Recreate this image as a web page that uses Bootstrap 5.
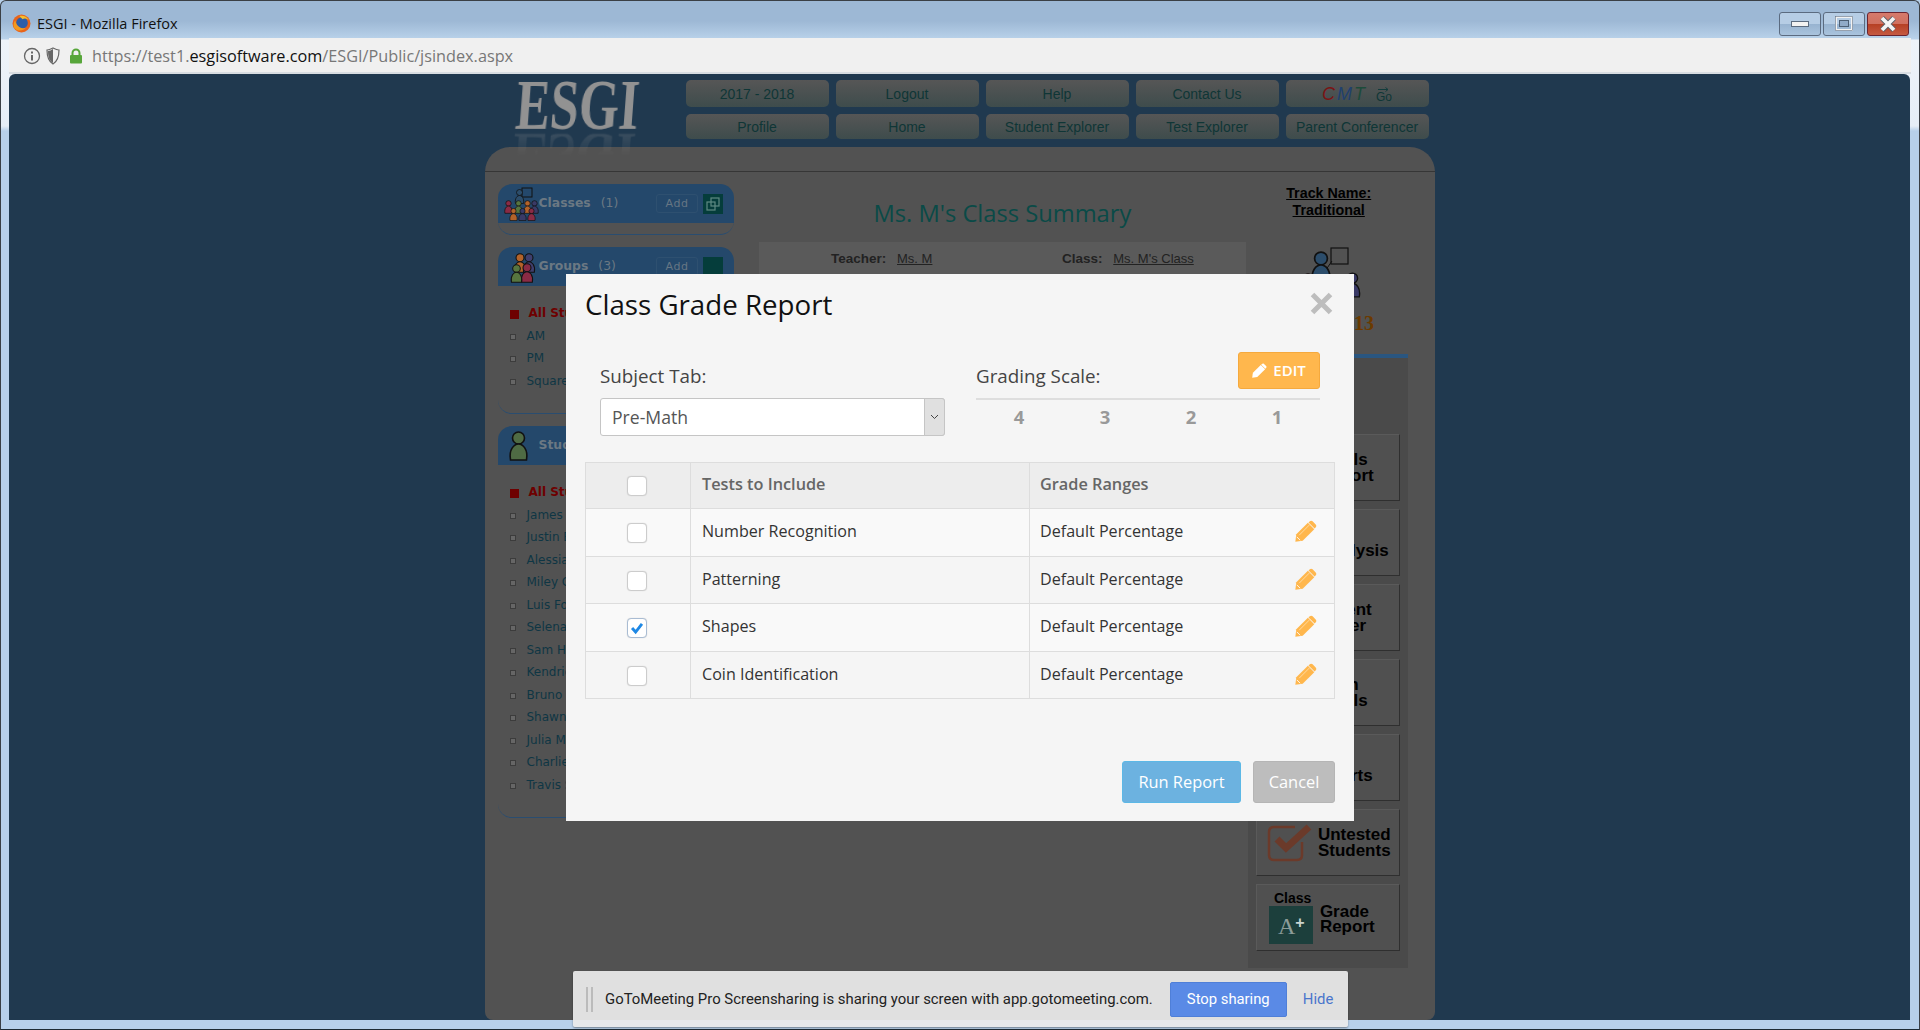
<!DOCTYPE html>
<html lang="en">
<head>
  <meta charset="UTF-8" />
  <meta name="viewport" content="width=device-width, initial-scale=1.0" />
  <title>ESGI - Mozilla Firefox</title>
  <link href="https://cdn.jsdelivr.net/npm/bootstrap@5.3.0/dist/css/bootstrap.min.css" rel="stylesheet" />
  <style>
    html, body { height: 100%; overflow: hidden; }
    body { background: #b7d0ea; font-family: "Open Sans", sans-serif; }
    .flex-none { flex: none; }

    /* browser chrome */
    .win-frame { height: 1030px; width: 1920px; border: 1px solid #3a3f45; border-bottom: 1px solid #1d2a33; border-radius: 6px 6px 0 0; background: linear-gradient(to bottom, #9db8d5 0, #9db8d5 20px, #b9d2ea 38px, #eef3f9 39px, #e6eef7 125px, #b7d0ea 130px); }
    .win-title { height: 37px; padding: 8px 9px 0 11px; font-size: 14.5px; color: #111; }
    .win-logo { margin-right: 6px; }
    .win-btn { width: 42px; height: 24px; border: 1px solid #5b6b80; border-radius: 3px; background: linear-gradient(to bottom, #b6cde5 0, #b6cde5 48%, #97b3d0 50%, #a9c3dd 100%); }
    .win-btn-close { border-color: #6b2430; background: linear-gradient(to bottom, #d67a6c 0, #d0705f 48%, #b63f23 50%, #c55a42 100%); }
    .win-btn-row { gap: 2px; margin-right: 1px; }
    .addr-bar { height: 36px; margin: 0 8px 0 8px; padding: 2px 11px 0 14px; background: #f0f0f0; border-bottom: 2px solid #d8dde2; font-size: 16.25px; color: #777; }
    .addr-lock { margin: 0 9px 0 4px; }
    .addr-dark { color: #111; }

    /* dimmed application */
    .app-page { height: 946px; margin: 0 9px 0 8px; background: #20394f; border-radius: 6px 6px 0 0; position: relative; overflow: hidden; }
    .app-wrap { width: 950px; height: 100%; margin: 0 auto; }
    .app-top { height: 73px; padding: 6px 6px 0 31px; }
    .esgi-logo { width: 170px; padding-left: 2px; }
    .esgi-word { display: block; height: 44px; font-family: "Liberation Serif", serif; font-weight: 700; font-size: 66px; line-height: 44px; color: #929292; transform: scale(.78, 1.1) skewX(-6deg); transform-origin: left top; -webkit-box-reflect: below 5px linear-gradient(transparent 55%, rgba(0, 0, 0, .22)); }
    .nav-grid { display: grid; grid-template-columns: repeat(5, 143px); grid-template-rows: 27px 25px; gap: 7px; }
    .nav-tile { display: flex; align-items: center; justify-content: center; padding-top: 2px; border-radius: 5px; background: linear-gradient(to bottom, #565656, #3e4c4c); font-family: "Liberation Sans", sans-serif; font-size: 14px; color: #0f3636; }
    .cmt-c { color: #7a1414; } .cmt-m { color: #20406f; } .cmt-t { color: #1c4b3a; }
    .cmt-word { font-size: 18px; font-style: italic; letter-spacing: 2px; margin-right: 9px; }
    .cmt-go { font-size: 12px; line-height: 11px; }

    .app-panel { height: 873px; background: #525252; border-radius: 25px 25px 8px 8px; }
    .panel-rule { height: 25px; border-bottom: 1px solid #363636; }
    .panel-body { padding: 12px 25px 0 13px; }
    .side-col { width: 237px; margin-right: 25px; font-family: "DejaVu Sans", sans-serif; }
    .side-box { border-bottom: 1px solid #2a4d70; border-radius: 0 0 14px 14px; margin-bottom: 12px; }
    .side-head { height: 39px; background: #24486b; border-radius: 14px 14px 0 0; padding: 0 11px 0 5px; color: #6b7883; font-size: 12.4px; }
    .side-ico { width: 36px; flex: none; }
    .side-name { font-weight: 700; margin-right: 10px; }
    .side-add { margin-left: auto; width: 42px; height: 19px; border: 1px solid #2e5070; border-radius: 3px; font-size: 11px; line-height: 17px; text-align: center; letter-spacing: .5px; color: #667684; }
    .side-addico { width: 20px; height: 20px; background: #053d3b; margin-left: 5px; }
    .side-spacer { height: 11px; }
    .side-list { padding: 16px 0 21px 12px; margin: 0; list-style: none; font-size: 12px; line-height: 22.5px; color: #0f3644; }
    .side-list li { position: relative; padding-left: 17px; white-space: nowrap; }
    .side-list li::before { content: ""; position: absolute; left: 0; top: 9px; width: 6px; height: 6px; border: 1px solid #3c3c3c; background: #666; }
    .side-list li.side-all { color: #6e0000; font-weight: 700; padding-left: 19px; }
    .side-list li.side-all::before { width: 9px; height: 9px; background: #6e0000; border: 0; top: 8px; }
    .mid-col { width: 488px; }
    .mid-title { height: 58px; padding-top: 11px; margin: 0; font-size: 23.7px; font-weight: 400; line-height: 36px; color: #0a4a47; text-align: center; }
    .mid-info { height: 60px; background: #5a5a5a; font-family: "Liberation Sans", sans-serif; font-size: 13.5px; color: #222; padding-top: 7px; }
    .mid-info u { margin-left: 7px; font-size: 13px; }
    .info-a { width: 303px; padding-left: 72px; }
    .right-col { width: 162px; margin-left: 2px; }
    .track-name { height: 62px; padding-top: 1px; text-align: center; font-family: "Liberation Sans", sans-serif; font-weight: 700; font-size: 14.3px; line-height: 17px; color: #000; text-decoration: underline; }
    .track-ico { height: 108px; position: relative; }
    .track-svg { margin-left: 28px; }
    .track-count { position: absolute; left: 106px; top: 62px; font-family: "Liberation Serif", serif; font-weight: 700; font-size: 20px; color: #6b3a00; }
    .tool-col { height: 614px; border-top: 4px solid #2a5680; background: #4a4a4a; padding: 76px 8px 0; margin-right: 2px; }
    .tool-tile { height: 67px; margin-bottom: 8px; border: 1px solid #5a5a5a; border-right-color: #2f2f2f; border-bottom-color: #2f2f2f; display: flex; align-items: center; font-family: "Liberation Sans", sans-serif; font-weight: 700; font-size: 17px; line-height: 15.5px; color: #000; background: #505050; }
    .tool-ico { width: 62px; flex: none; position: relative; height: 100%; }
    .tool-untested .tool-ico { width: 61px; }
    .tool-grade { padding-top: 3px; }
    .tool-grade .tool-ico { width: 63px; }
    .tool-sub { position: absolute; left: 17px; top: 3px; font-size: 14px; line-height: 14px; }
    .tool-square { position: absolute; left: 12px; top: 18px; width: 44px; height: 38px; background: #1c3f3c; color: #8c9c98; font-family: "Liberation Serif", serif; font-weight: 400; font-size: 24px; line-height: 40px; padding-left: 9px; }
    .tool-square sup { color: #c9d4d0; font-family: "Liberation Sans", sans-serif; font-weight: 700; font-size: 16px; top: -6px; position: relative; vertical-align: baseline; }
    .tool-check { position: absolute; left: 10px; top: 14px; }
    .panel-foot { margin-top: auto; padding-left: 382px; font-size: 14px; line-height: 16px; padding-bottom: 1px; color: #5c5c5c; }

    /* the dialog */
    .grade-dialog { position: absolute; left: 557px; top: 200px; width: 788px; height: 547px; padding: 12px 19px 18px 19px; background: #f5f5f5; border: 0; border-radius: 0; color: #333; }
    .dlg-head { height: 66px; }
    .dlg-title { font-size: 27.7px; line-height: 36px; font-weight: 400; color: #111; margin: 0; }
    .dlg-close { width: 23px; margin: 6px 2px 0 0; }
    .dlg-form { height: 110px; padding: 0 15px 0 15px; gap: 31px; }
    .dlg-left { width: 345px; }
    .dlg-right { width: 344px; }
    .dlg-label { font-size: 18.8px; line-height: 24px; color: #444; margin: 12px 0 10px; }
    .sel-wrap { position: relative; height: 38px; }
    .subject-select { height: 38px; padding: 0 0 0 11px; font-size: 17.6px; color: #555; border: 1px solid #c5c5c5; border-radius: 3px; background: #fff; appearance: none; box-shadow: none; }
    .sel-arrow { position: absolute; right: 0; top: 0; width: 21px; height: 38px; background: #e0e0e0; border: 1px solid #c5c5c5; border-radius: 0 3px 3px 0; display: flex; align-items: center; justify-content: center; }
    .edit-btn { width: 82px; height: 37px; padding: 0; gap: 6px; background: #ffb74d; border: 1px solid #f5a93d; border-radius: 3px; font-size: 15px; font-weight: 600; color: #fff; }
    .edit-btn:hover { background: #ffb74d; color: #fff; border-color: #f5a93d; }
    .scale-head { height: 48px; border-bottom: 2px solid #dedede; }
    .scale-head .dlg-label { margin: 12px 0 0; }
    .scale-nums { display: grid; grid-template-columns: repeat(4, 86px); font-size: 18.5px; font-weight: 700; color: #999; text-align: center; padding-top: 5px; line-height: 24px; }
    .grade-table { table-layout: fixed; width: 749px; margin: 0; font-size: 16.1px; border-color: #ddd; --bs-table-bg: transparent; --bs-table-color: #333; }
    .col-pick { width: 105px; } .col-test { width: 339px; } .col-range { width: 305px; }
    .grade-table th, .grade-table td { padding: 0 10px 2px 11px; vertical-align: middle; border: 1.5px solid #ddd; }
    .grade-table thead th { height: 46px; background: #ededed; font-weight: 600; font-size: 16.3px; color: #666; }
    .grade-table th:last-child, .grade-table td:last-child { padding-left: 10px; }
    .grade-table tbody tr:nth-child(odd) td { background: #f9f9f9; }
    .grade-table tbody td { height: 47.5px; }
    .grade-table .cell-check { text-align: center; padding: 0 2px 0 0; }
    .grade-table td.range-cell { padding-right: 17px; }
    .pick-box { width: 20px; height: 20px; margin: 3px 0 0; border: 1px solid #ccc; border-radius: 0; background-color: #fff; box-shadow: 0 0 1px #ccc; }
    .pick-box:checked { background-color: #fff; border-color: #a9bcd3; background-image: url("data:image/svg+xml,%3csvg xmlns='http://www.w3.org/2000/svg' viewBox='0 0 20 20'%3e%3cpath fill='none' stroke='%231e88e5' stroke-width='3.2' d='M4.5 10l4 4.5 7-9'/%3e%3c/svg%3e"); }
    .dlg-foot { margin-top: auto; gap: 12px; }
    .run-btn, .cancel-btn { height: 42px; padding: 0; font-size: 16.4px; color: #fff; border-radius: 3px; }
    .run-btn { width: 119px; background: #6cb2e0; border: 1px solid #5cb8e6; }
    .cancel-btn { width: 82px; background: #bdbdbd; border: 1px solid #b5b5b5; }
    .run-btn:hover { background: #6cb2e0; color: #fff; } .cancel-btn:hover { background: #bdbdbd; color: #fff; }

    /* screen sharing notice */
    .share-bar { position: absolute; left: 572px; top: 970px; width: 775px; height: 56px; padding: 0 14px 0 13px; border-radius: 2px; background: rgba(235, 235, 235, .93); box-shadow: 0 1px 2px rgba(0, 0, 0, .4); font-family: Roboto, sans-serif; font-size: 14.9px; color: #222; z-index: 5; }
    .share-grip { width: 7px; height: 25px; border-left: 2px solid #bbb; border-right: 2px solid #bbb; margin-right: 12px; }
    .share-stop { width: 117px; height: 35px; margin-left: 17px; padding: 0; background: #5a8ae6; border: 1px solid #4f7fd8; border-radius: 2px; color: #fff; font-size: 14.8px; }
    .share-stop:hover { background: #5a8ae6; color: #fff; }
    .share-hide { margin-left: 16px; color: #4a76cc; text-decoration: none; }
  </style>
</head>
<body>
<svg width="0" height="0" class="position-absolute">
  <symbol id="kid" viewBox="0 0 20 30">
    <circle cx="10" cy="7" r="6" stroke="#111" stroke-width="1.6"/>
    <path d="M2 29C0 18 6 13 10 13s10 5 8 16z" stroke="#111" stroke-width="1.6"/>
  </symbol>
  <symbol id="pencil" viewBox="0 0 20 20">
    <path d="M.3 19.700 1.200 13 11.700 2.500l5.800 5.800L7 18.800z"/>
    <path d="M13.200 1.300c1-.9 2-.9 2.800-.1l2.800 2.800c.8.8.8 1.800-.1 2.800l-.9.900-5.500-5.500z"/>
    <path d="M3.800 13.800 13 4.600" stroke="#fff" stroke-width=".6" opacity=".7"/>
    <path d="M1.600 15.300l3.100 3.100" stroke="#fff" stroke-width=".8"/>
  </symbol>
</svg>

<div class="win-frame position-relative">
  <!-- title bar -->
  <div class="win-title d-flex align-items-center">
    <svg width="19" height="19" viewBox="0 0 18 18" class="win-logo">
      <circle cx="9" cy="9" r="8.5" fill="#e8641b"/>
      <circle cx="9.5" cy="8.5" r="5.5" fill="#2d5ea8"/>
      <path d="M3 6c1 5 5 9 10 7-2 3-8 4-11 0C1 11 1.500 8 3 6z" fill="#f29a1f"/>
      <path d="M7 2c3-1 7 0 9 4-2-2-5-2-6-1z" fill="#f6c02c"/>
    </svg>
    <span>ESGI - Mozilla Firefox</span>
    <div class="win-btn-row d-flex ms-auto">
      <div class="win-btn d-flex align-items-center justify-content-center">
        <svg width="18" height="6"><rect x=".5" y=".5" width="17" height="5" fill="#f2f2f2" stroke="#5b6b80"/></svg>
      </div>
      <div class="win-btn d-flex align-items-center justify-content-center">
        <svg width="18" height="15"><rect x="1" y="1" width="16" height="13" fill="none" stroke="#f2f2f2" stroke-width="2"/><rect x=".5" y=".5" width="17" height="14" fill="none" stroke="#5b6b80" stroke-width=".6"/><rect x="4.500" y="4.500" width="9" height="6" fill="#90aac8" stroke="#4d5f75"/></svg>
      </div>
      <div class="win-btn win-btn-close d-flex align-items-center justify-content-center">
        <svg width="18" height="16" viewBox="0 0 18 16"><path d="M3 2l12 12M15 2 3 14" stroke="#5a5f68" stroke-width="5.400"/><path d="M3 2l12 12M15 2 3 14" stroke="#f4f4f4" stroke-width="3.800"/></svg>
      </div>
    </div>
  </div>

  <!-- address bar -->
  <div class="addr-bar d-flex align-items-center">
    <svg width="18" height="18" viewBox="0 0 18 18" class="me-1 flex-none">
      <circle cx="9" cy="9" r="7.500" fill="none" stroke="#666" stroke-width="1.300"/>
      <rect x="8" y="8" width="2" height="5.500" fill="#666"/><rect x="8" y="4.500" width="2" height="2" fill="#666"/>
    </svg>
    <svg width="16" height="18" viewBox="0 0 16 18" class="me-1 flex-none">
      <path d="M2 3c2 0 4-1 6-2 2 1 4 2 6 2 0 6-1 11-6 14C3 14 2 9 2 3z" fill="#f0f0f0" stroke="#666" stroke-width="1.200"/>
      <path d="M8 2v14C4 13.500 3 9 3 4c2 0 3-1 5-2z" fill="#666"/>
    </svg>
    <svg width="14" height="16" viewBox="0 0 14 16" class="addr-lock flex-none">
      <path d="M3.500 7V5a3.500 3.500 0 0 1 7 0v2" fill="none" stroke="#57a63a" stroke-width="2"/>
      <rect x="1" y="7" width="12" height="8.500" rx="1" fill="#57a63a"/>
    </svg>
    <span>https://test1.<span class="addr-dark">esgisoftware.com</span>/ESGI/Public/jsindex.aspx</span>
  </div>

  <!-- page behind the dialog -->
  <div class="app-page">
    <div class="app-wrap">
      <div class="app-top d-flex">
        <div class="esgi-logo"><span class="esgi-word">ESGI</span></div>
        <div class="nav-grid">
          <div class="nav-tile">2017 - 2018</div>
          <div class="nav-tile">Logout</div>
          <div class="nav-tile">Help</div>
          <div class="nav-tile">Contact Us</div>
          <div class="nav-tile">
            <span class="cmt-word"><span class="cmt-c">C</span><span class="cmt-m">M</span><span class="cmt-t">T</span></span>
            <span class="cmt-go d-flex flex-column align-items-center">
              <svg width="11" height="5" viewBox="0 0 11 5"><path d="M0 2.500h10M7.500.5l2.500 2-2.500 2" fill="none" stroke="#123c3c"/></svg>
              Go
            </span>
          </div>
          <div class="nav-tile">Profile</div>
          <div class="nav-tile">Home</div>
          <div class="nav-tile">Student Explorer</div>
          <div class="nav-tile">Test Explorer</div>
          <div class="nav-tile">Parent Conferencer</div>
        </div>
      </div>

      <div class="app-panel d-flex flex-column">
        <div class="panel-rule"></div>
        <div class="panel-body d-flex">
          <div class="side-col">
            <div class="side-box">
              <div class="side-head d-flex align-items-center">
                <svg class="side-ico" height="34" viewBox="0 0 36 34">
                  <rect x="19" y="1" width="10" height="9" fill="none" stroke="#111"/>
                  <use href="#kid" x="11" y="2" width="11" height="15" fill="#2c4d6b"/>
                  <use href="#kid" x="1" y="13" width="9" height="14" fill="#8a2b45"/>
                  <use href="#kid" x="27" y="13" width="9" height="14" fill="#3a3a66"/>
                  <use href="#kid" x="11" y="13" width="9" height="14" fill="#57753f"/>
                  <use href="#kid" x="20" y="13" width="9" height="14" fill="#b3632a"/>
                  <use href="#kid" x="6" y="21" width="9" height="13" fill="#b3632a"/>
                  <use href="#kid" x="15" y="21" width="9" height="13" fill="#3a3a66"/>
                  <use href="#kid" x="24" y="21" width="9" height="13" fill="#8a2b45"/>
                </svg>
                <span class="side-name">Classes</span><span>(1)</span>
                <span class="side-add">Add</span>
                <span class="side-addico d-flex align-items-center justify-content-center">
                  <svg width="14" height="14" viewBox="0 0 14 14" fill="none" stroke="#5f8a84" stroke-width="1.200"><rect x="5" y="1" width="8" height="8"/><rect x="1" y="5" width="8" height="8"/></svg>
                </span>
              </div>
              <div class="side-spacer"></div>
            </div>

            <div class="side-box">
              <div class="side-head d-flex align-items-center">
                <svg class="side-ico" height="32" viewBox="0 0 36 32">
                  <use href="#kid" x="10" y="2" width="14" height="20" fill="#b3632a"/>
                  <use href="#kid" x="19" y="2" width="14" height="20" fill="#3f3f6e"/>
                  <use href="#kid" x="17" y="12" width="14" height="20" fill="#8a2b45"/>
                  <use href="#kid" x="6" y="13" width="15" height="19" fill="#57753f"/>
                </svg>
                <span class="side-name">Groups</span><span>(3)</span>
                <span class="side-add">Add</span>
                <span class="side-addico"></span>
              </div>
              <ul class="side-list">
                <li class="side-all">All Students</li>
                <li>AM</li>
                <li>PM</li>
                <li>Squares</li>
              </ul>
            </div>

            <div class="side-box">
              <div class="side-head d-flex align-items-center">
                <svg class="side-ico" height="32" viewBox="0 0 36 32">
                  <use href="#kid" x="5" y="1" width="21" height="30" fill="#4f6b44"/>
                </svg>
                <span class="side-name">Students</span><span>(13)</span>
                <span class="side-add">Add</span>
                <span class="side-addico"></span>
              </div>
              <ul class="side-list">
                <li class="side-all">All Students</li>
                <li>James Arthur</li>
                <li>Justin Bieber</li>
                <li>Alessia Cara</li>
                <li>Miley Cyrus</li>
                <li>Luis Fonsi</li>
                <li>Selena Gomez</li>
                <li>Sam Hunt</li>
                <li>Kendrick Lamar</li>
                <li>Bruno Mars</li>
                <li>Shawn Mendes</li>
                <li>Julia Michaels</li>
                <li>Charlie Puth</li>
                <li>Travis Scott</li>
              </ul>
            </div>
          </div>

          <div class="mid-col">
            <h1 class="mid-title">Ms. M's Class Summary</h1>
            <div class="mid-info d-flex">
              <div class="info-a"><b>Teacher:</b> <u>Ms. M</u></div>
              <div><b>Class:</b> <u>Ms. M's Class</u></div>
            </div>
          </div>

          <div class="right-col">
            <div class="track-name">Track Name:<br>Traditional</div>
            <div class="track-ico">
              <svg width="100" height="60" viewBox="0 0 100 60" class="d-block track-svg">
                <rect x="55" y="2" width="17" height="16" fill="none" stroke="#111" stroke-width="1.200"/>
                <path d="M47 28 56 15" stroke="#111"/>
                <use href="#kid" x="34" y="5" width="22" height="32" fill="#2c4d6b"/>
                <use href="#kid" x="24" y="27" width="16" height="24" fill="#8a2b45"/>
                <use href="#kid" x="68" y="26" width="17" height="26" fill="#3a3a66"/>
              </svg>
              <span class="track-count">13</span>
            </div>
            <div class="tool-col">
              <div class="tool-tile"><span class="tool-ico"></span><span>Totals<br>Report</span></div>
              <div class="tool-tile"><span class="tool-ico"></span><span>Item<br>Analysis</span></div>
              <div class="tool-tile"><span class="tool-ico"></span><span>Parent<br>Letter</span></div>
              <div class="tool-tile"><span class="tool-ico"></span><span>Math<br>Totals</span></div>
              <div class="tool-tile"><span class="tool-ico"></span><span>Pie<br>Charts</span></div>
              <div class="tool-tile tool-untested">
                <span class="tool-ico">
                  <svg class="tool-check" width="46" height="40" viewBox="0 0 46 40">
                    <path d="M28 3H7Q2 3 2 8v23q0 5 5 5h23q5 0 5-5V18" fill="none" stroke="#6b3a2a" stroke-width="2.500"/>
                    <path d="M10 15l9 9L42 3" fill="none" stroke="#6b3a2a" stroke-width="7"/>
                  </svg>
                </span>
                <span>Untested<br>Students</span>
              </div>
              <div class="tool-tile tool-grade">
                <span class="tool-ico">
                  <span class="tool-sub">Class</span>
                  <span class="tool-square">A<sup>+</sup></span>
                </span>
                <span>Grade<br>Report</span>
              </div>
            </div>
          </div>
        </div>
        <div class="panel-foot">Terms of Use &nbsp;|&nbsp; Privacy Policy</div>
      </div>
    </div>

    <!-- Class Grade Report dialog -->
    <div class="modal-content grade-dialog">
      <div class="dlg-head d-flex justify-content-between align-items-start">
        <h2 class="dlg-title">Class Grade Report</h2>
        <svg class="dlg-close" width="23" height="23" viewBox="0 0 23 23"><path d="M2.500 2.500l18 18M20.500 2.500l-18 18" stroke="#bdbdbd" stroke-width="5"/></svg>
      </div>

      <div class="dlg-form d-flex">
        <div class="dlg-left">
          <div class="dlg-label">Subject Tab:</div>
          <div class="sel-wrap">
            <select class="form-select subject-select"><option>Pre-Math</option></select>
            <span class="sel-arrow"><svg width="9" height="6" viewBox="0 0 9 6"><path d="M1 1l3.500 3.500L8 1" fill="none" stroke="#444"/></svg></span>
          </div>
        </div>
        <div class="dlg-right">
          <div class="scale-head d-flex justify-content-between align-items-start">
            <div class="dlg-label">Grading Scale:</div>
            <button type="button" class="btn edit-btn d-flex align-items-center justify-content-center">
              <svg width="15" height="15" fill="#fff"><use href="#pencil"/></svg>EDIT
            </button>
          </div>
          <div class="scale-nums"><span>4</span><span>3</span><span>2</span><span>1</span></div>
        </div>
      </div>

      <table class="table grade-table">
        <colgroup><col class="col-pick"><col class="col-test"><col class="col-range"></colgroup>
        <thead>
          <tr>
            <th class="cell-check"><input type="checkbox" class="form-check-input pick-box"></th>
            <th>Tests to Include</th>
            <th>Grade Ranges</th>
          </tr>
        </thead>
        <tbody>
          <tr>
            <td class="cell-check"><input type="checkbox" class="form-check-input pick-box"></td>
            <td>Number Recognition</td>
            <td class="range-cell"><div class="d-flex justify-content-between align-items-center">Default Percentage<svg width="22" height="22" fill="#ffb74d"><use href="#pencil"/></svg></div></td>
          </tr>
          <tr>
            <td class="cell-check"><input type="checkbox" class="form-check-input pick-box"></td>
            <td>Patterning</td>
            <td class="range-cell"><div class="d-flex justify-content-between align-items-center">Default Percentage<svg width="22" height="22" fill="#ffb74d"><use href="#pencil"/></svg></div></td>
          </tr>
          <tr>
            <td class="cell-check"><input type="checkbox" class="form-check-input pick-box" checked></td>
            <td>Shapes</td>
            <td class="range-cell"><div class="d-flex justify-content-between align-items-center">Default Percentage<svg width="22" height="22" fill="#ffb74d"><use href="#pencil"/></svg></div></td>
          </tr>
          <tr>
            <td class="cell-check"><input type="checkbox" class="form-check-input pick-box"></td>
            <td>Coin Identification</td>
            <td class="range-cell"><div class="d-flex justify-content-between align-items-center">Default Percentage<svg width="22" height="22" fill="#ffb74d"><use href="#pencil"/></svg></div></td>
          </tr>
        </tbody>
      </table>

      <div class="dlg-foot d-flex justify-content-end">
        <button type="button" class="btn run-btn">Run Report</button>
        <button type="button" class="btn cancel-btn">Cancel</button>
      </div>
    </div>
  </div>

  <!-- screen sharing notice -->
  <div class="share-bar d-flex align-items-center">
    <span class="share-grip"></span>
    <span>GoToMeeting Pro Screensharing is sharing your screen with app.gotomeeting.com.</span>
    <button type="button" class="btn share-stop">Stop sharing</button>
    <a href="#" class="share-hide">Hide</a>
  </div>
</div>

<script src="https://cdn.jsdelivr.net/npm/bootstrap@5.3.0/dist/js/bootstrap.bundle.min.js"></script>
</body>
</html>
